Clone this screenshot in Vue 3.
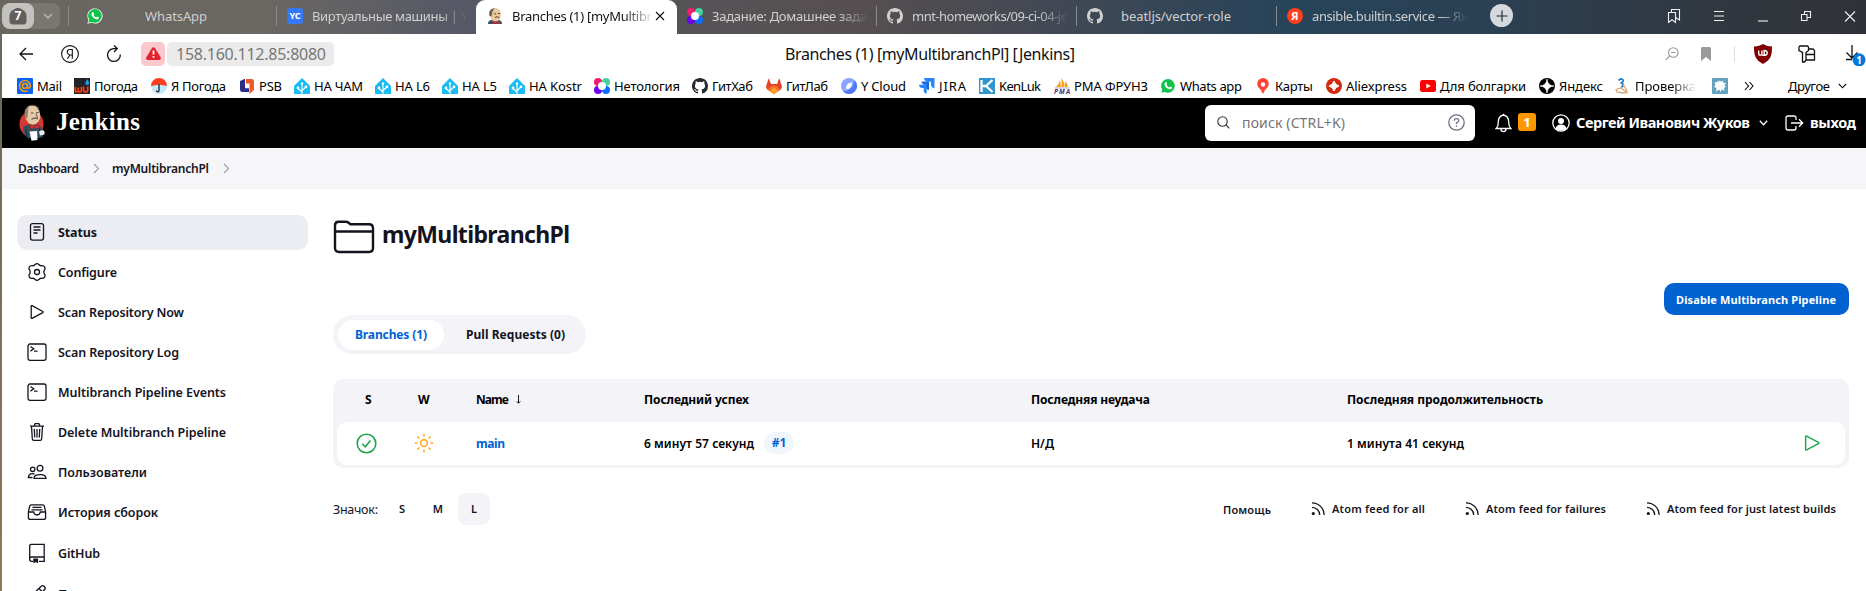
<script setup>
const NBSP = '\u00a0'

// Spreads a label to a given width with letter spacing.
const vFit = {
  mounted(el, { value }) {
    const chars = el.textContent.length
    if (!value || !chars) return
    const spacing = (value - el.getBoundingClientRect().width) / Math.max(chars - 1, 1)
    el.style.letterSpacing = `${spacing}px`
    el.style.marginRight = `${-spacing}px`
  }
}

const tabs = [
  { icon: 'whatsapp', text: 'WhatsApp', w: 62, wide: true },
  { icon: 'yc', text: 'Виртуальные машины | Y', w: 156, fade: true },
  { icon: 'jenkins-small', text: 'Branches (1) [myMultibr', w: 140, fade: true, active: true },
  { icon: 'netology', text: 'Задание: Домашнее зада', w: 155, fade: true, nosep: true },
  { icon: 'github', text: 'mnt-homeworks/09-ci-04-je', w: 156, fade: true },
  { icon: 'github', text: 'beatljs/vector-role', w: 110, center: true },
  { icon: 'yandex', text: 'ansible.builtin.service — Ян', w: 157, fade: true }
]

const bookmarks = [
  ['mail', 'Mail', 17, 25], ['wu', 'Погода', 74, 44], ['umbrella', 'Я Погода', 151, 55],
  ['psb', 'PSB', 239, 23], ['ha', 'НА ЧАМ', 294, 49], ['ha', 'НА L6', 375, 35],
  ['ha', 'НА L5', 442, 35], ['ha', 'НА Kostr', 509, 53], ['netology', 'Нетология', 594, 66],
  ['github', 'ГитХаб', 692, 41], ['gitlab', 'ГитЛаб', 766, 42], ['ycloud', 'Y Cloud', 841, 45],
  ['jira', 'JIRA', 919, 27], ['kenluk', 'KenLuk', 979, 42], ['pma', 'РМА ФРУНЗ', 1054, 74],
  ['whatsapp', 'Whats app', 1160, 62], ['pin', 'Карты', 1255, 38], ['ali', 'Aliexpress', 1326, 61],
  ['youtube', 'Для болгарки', 1420, 86], ['dzen', 'Яндекс', 1539, 44], ['check3', 'Проверка', 1615, 61],
  ['splat', '', 1712, 0]
].map(([icon, text, x, w], i, all) => ({ icon, text, w, step: (all[i + 1]?.[2] ?? 1744) - x }))

const side = [
  ['status', 'Status', 39], ['gear', 'Configure', 59], ['play', 'Scan Repository Now', 126],
  ['terminal', 'Scan Repository Log', 121], ['terminal', 'Multibranch Pipeline Events', 168],
  ['trash', 'Delete Multibranch Pipeline', 168], ['people', 'Пользователи', 89],
  ['inbox', 'История сборок', 100], ['repo', 'GitHub', 42], ['pencil', 'Переименовать', 102]
]

const feeds = [
  ['Atom feed for all', 93, 154], ['Atom feed for failures', 120, 181], ['Atom feed for just latest builds', 169, 190]
]
</script>

<template>
  <svg class="sprite" width="0" height="0">
    <symbol id="whatsapp" viewBox="0 0 16 16">
      <path d="M0.4 15.8 1.4 11.8A7.6 7.6 0 1 1 4.6 14.8Z" fill="#fff" /><path d="M1.3 14.8 2.2 11.6A6.8 6.8 0 1 1 4.7 13.9Z" fill="#10c24a" />
      <path d="M5.4 4.3c.5-.5 1-.3 1.2.2l.5 1.2c.1.4-.6.9-.6 1.1.5 1.2 1.5 2.1 2.7 2.6.3 0 .8-1 1.1-.9l1.5.8c.4.3 0 1.400-.5 1.700C8.800 12.400 4 8.500 4.500 5.700c.1-.6.500-1 .9-1.400Z" fill="#fff" />
    </symbol>
    <symbol id="yc" viewBox="0 0 16 16"><rect width="16" height="16" rx="3" fill="#3478f6" /><text x="8" y="11.3" text-anchor="middle" font-size="9" font-weight="700" fill="#fff">YC</text></symbol>
    <symbol id="jenkins-small" viewBox="0 0 16 16">
      <path d="M1 16c0-2.500 1.500-4 4-4h6c2.500 0 4 1.500 4 4Z" fill="#34506a" /><path d="M3 5C3 1 6 .3 8.500.3S14 2 14 6s-2 7.500-5.500 7.500S3 10 3 5Z" fill="#ecc8a0" />
      <path d="M2.600 8C.8 2 5 0 8.500.2 6 1 5.300 3 4.600 8.500Z" fill="#6a5f53" /><path d="M7 5.800h2.300M11 5.500h2M8 9.500q2-1.500 4.500 0" stroke="#54463a" fill="none" /><path d="M5.500 13 9 14l3.500-1v3L9 15l-3.500 1Z" fill="#d8262f" />
    </symbol>
    <symbol id="netology" viewBox="0 0 16 16"><circle cx="4" cy="4" r="4" fill="#f01d70" /><circle cx="12" cy="4" r="4" fill="#45d09e" /><circle cx="4" cy="12" r="4" fill="#6a00f4" /><circle cx="12" cy="12" r="4" fill="#0c6cff" /><circle cx="8" cy="8" r="4" fill="#fff" /></symbol>
    <symbol id="github" viewBox="0 0 16 16"><path fill="currentColor" d="M8 0C3.580 0 0 3.580 0 8c0 3.540 2.290 6.530 5.470 7.590.4.070.55-.17.55-.38 0-.19-.01-.82-.01-1.490-2.010.37-2.530-.49-2.690-.94-.09-.23-.48-.94-.82-1.130-.28-.15-.68-.52-.01-.53.63-.01 1.080.58 1.230.82.72 1.210 1.870.87 2.330.66.07-.52.28-.87.51-1.070-1.780-.2-3.640-.89-3.640-3.950 0-.87.31-1.590.82-2.150-.08-.2-.36-1.020.08-2.120 0 0 .67-.21 2.200.82a7.600 7.600 0 0 1 4 0c1.530-1.040 2.200-.82 2.200-.82.44 1.100.16 1.920.08 2.120.51.56.82 1.270.82 2.150 0 3.070-1.870 3.750-3.650 3.950.29.25.54.73.54 1.480 0 1.070-.01 1.930-.01 2.200 0 .21.15.46.55.38A8.010 8.010 0 0 0 16 8c0-4.420-3.580-8-8-8Z" /></symbol>
    <symbol id="yandex" viewBox="0 0 16 16"><circle cx="8" cy="8" r="8" fill="#fc3f1d" /><text x="7.800" y="12" text-anchor="middle" font-size="11" font-weight="700" fill="#fff">Я</text></symbol>
    <symbol id="mail" viewBox="0 0 16 16"><rect width="16" height="16" rx="1" fill="#0a63f5" /><circle cx="8" cy="8" r="2.500" fill="none" stroke="#ff9e00" stroke-width="1.500" /><path d="M10.500 5.500v3.500q.2 1.500 1.500 1.200 1.500-.7 1.300-3A5.400 5.400 0 1 0 11 12.500" fill="none" stroke="#ff9e00" stroke-width="1.400" /></symbol>
    <symbol id="wu" viewBox="0 0 16 16"><rect width="16" height="16" fill="#20242a" /><path d="M1.300 9v3q0 2 1.400 2t1.600-2V9.500v2.500q0 2 1.500 2T7.400 12V9M9.600 8.500V12q0 2 1.900 2 2.200 0 2.200-2V8.500" fill="none" stroke="#ff3b10" stroke-width="1.700" /><path d="M13 1c2 3 2.500 3.500 1.800 5.200q-1.600 1.500-3.200 0C11 4.500 12 3.500 13 1Z" fill="#19a4ef" /></symbol>
    <symbol id="umbrella" viewBox="0 0 16 16"><circle cx="8" cy="8" r="8" fill="#c4e8fb" /><path d="M0 8a8 8 0 0 1 16 0L8 6.500Z" fill="#fc3f1d" /><path d="M8 6v6.500c0 1.800-2.500 1.800-2.500 0" fill="none" stroke="#222" stroke-width="1.300" /></symbol>
    <symbol id="psb" viewBox="0 0 16 16"><path d="M1 3 6 .8v9.500h4V14H3.500A2.500 2.500 0 0 1 1 11.500Z" fill="#2b2c85" /><path d="M7 1h5.500A2.500 2.500 0 0 1 15 3.500V12l-4.500 4V5.500H7Z" fill="#f0592a" /></symbol>
    <symbol id="ha" viewBox="0 0 16 16"><path d="M8 0 16 8v7.200q0 .8-.8.8H.8q-.8 0-.8-.8V8Z" fill="#18bcf2" /><path d="M8 6v10M8 14 4 10.500M8 12.500 12 9" stroke="#fff" stroke-width="1.100" /><circle cx="8" cy="5.500" r="1.200" fill="#fff" /><circle cx="4" cy="10" r="1.400" fill="#fff" /><circle cx="12" cy="8.800" r="1.400" fill="#fff" /></symbol>
    <symbol id="gitlab" viewBox="0 0 16 16"><path d="M3 .8 5 6h6l2-5.200q.3-.3.500 0L16 8.500q0 2-1.500 3.200L8 16l-6.500-4.300Q0 10.500 0 8.500L2.500.8q.2-.3.500 0Z" fill="#e24329" /><path d="M8 16 1.500 11.500 5 8.500q3-2 6 0l3.500 3Z" fill="#fc6d26" /><path d="M8 9.500 12 13 8 16 4 13Z" fill="#fca326" /></symbol>
    <symbol id="ycloud" viewBox="0 0 16 16"><circle cx="8" cy="8" r="8" fill="#8ba6ff" /><path d="M13.500 2.200A8 8 0 1 1 2 13.300Q12 13 13.500 2.200Z" fill="#5077f8" /><path d="M11 4.500Q11.500 11 5.200 11.300 4.500 5 11 4.500Z" fill="#fff" /></symbol>
    <symbol id="jira" viewBox="0 0 16 16"><path d="M5 0h10.500v10.300q-3.500-.4-3.500-4V3.700H9.300Q5.300 3.500 5 0Z" fill="#2684ff" /><path d="M2.500 3.500h7.500v8.500q-3-.3-3-3.200V6.700H5.500q-2.700-.2-3-3.200Z" fill="#1769e0" /><path d="M0 6.800h7.700v8.800q-3-.3-3-3.200V10H3.200Q.3 10 0 6.800Z" fill="#2684ff" /></symbol>
    <symbol id="kenluk" viewBox="0 0 16 16"><rect width="16" height="16" fill="#2f95d0" /><path d="M2.500 2v12M13.500 2 7 8l6.500 6M3.500 8H8" fill="none" stroke="#fff" stroke-width="2.300" /></symbol>
    <symbol id="pma" viewBox="0 0 16 16"><path d="M2 9Q5 6 6 2l1 7ZM7.500 0Q11 5 10.500 9h-3ZM11 3q3 3 3 6h-3Z" fill="#f7a21b" /><path d="M1 10h14" stroke="#a7a7c4" /><text x="8" y="16" text-anchor="middle" textLength="16" font-size="6.500" font-weight="700" font-style="italic" fill="#38357c">PMA</text></symbol>
    <symbol id="pin" viewBox="0 0 16 16"><path d="M8 16Q6.500 11.500 4 10A5.800 5.800 0 1 1 12 10Q9.500 11.500 8 16Z" fill="#ff4433" /><circle cx="8" cy="6.500" r="2.200" fill="#fff" /></symbol>
    <symbol id="ali" viewBox="0 0 16 16"><circle cx="8" cy="8" r="8" fill="#d32a12" /><path d="M8 3Q9 7 13 8 9 9 8 13 7 9 3 8 7 7 8 3Z" fill="#fff" stroke="#fff" /></symbol>
    <symbol id="youtube" viewBox="0 0 16 16"><rect y="2" width="16" height="12" rx="2.500" fill="#f00" /><path d="M6.300 5.500v5L10.800 8Z" fill="#fff" /></symbol>
    <symbol id="dzen" viewBox="0 0 16 16"><circle cx="8" cy="8" r="8" fill="#000" /><path d="M8 1Q8.500 7.500 15 8 8.500 8.500 8 15 7.500 8.500 1 8 7.500 7.500 8 1Z" fill="#fff" stroke="#fff" stroke-width=".6" /></symbol>
    <symbol id="check3" viewBox="0 0 16 16"><path d="M3.500 2.500Q5 .5 7 1.200C9 2 8.500 4.500 5.500 5 9 5 9 8.500 6 9" fill="none" stroke="#2a80cc" stroke-width="1.800" /><path d="M1 11.500 6 10l6 4.500-4 .5-6-1ZM8 6l3 5 1 4" fill="none" stroke="#d5a874" stroke-width="1.300" /></symbol>
    <symbol id="splat" viewBox="0 0 16 16"><rect width="16" height="16" rx="1" fill="#63a2bf" /><path d="m8 2 .8 2L11 2.500l.3 2.300L14 5l-1.500 2.200L14 9l-2 .8.500 3L10 11.500 8.500 14l-1.200-2.500L4 13.500 4.500 10 2 8.800 3.500 7 2.500 4.200l2.700.3L5.500 2.500 7 4Z" fill="#fff" /></symbol>
    <symbol id="status" viewBox="0 0 20 20"><g fill="none" stroke="currentColor" stroke-width="1.300"><rect x="3.500" y="1.600" width="13" height="16.500" rx="2" /><path d="M6.500 5h7M6.500 8h7M6.500 11h4" /></g></symbol>
    <symbol id="gear" viewBox="0 0 20 20"><g fill="none" stroke="currentColor" stroke-width="1.300" stroke-linejoin="round"><path d="M8.100 2.400Q10 .8 11.900 2.400q.9 1.700 2.700 1.300 2.400-.2 2.900 1.200 1 1.800 0 3-1.400 2.100 0 4.200 1 1.200 0 3-.8 1.500-2.900 1.200-1.800-.3-2.700 1.300-1.900 1.600-3.800 0-.9-1.600-2.700-1.300-2.100.3-2.900-1.200-1-1.800 0-3 1.400-2.100 0-4.200-1-1.200 0-3Q3 3.500 5.400 3.700q1.800.4 2.700-1.300Z" /><circle cx="10" cy="10" r="2.500" /></g></symbol>
    <symbol id="play" viewBox="0 0 20 20"><path d="M4.200 4.300v11.400q0 1 .9.600l10.700-5.700q.8-.6 0-1.100L5.100 3.700q-.9-.4-.9.600Z" fill="none" stroke="currentColor" stroke-width="1.300" /></symbol>
    <symbol id="terminal" viewBox="0 0 20 20"><g fill="none" stroke="currentColor" stroke-width="1.300"><rect x="1" y="2" width="18" height="16.300" rx="2" /><path d="m3.500 4.500 3.200 2.300-3.200 2.300M7 9.200h3.500" /></g></symbol>
    <symbol id="trash" viewBox="0 0 20 20"><g fill="none" stroke="currentColor" stroke-width="1.300"><path d="M3 4.200h14M4.500 4.200l.8 12.500q.1 1.600 1.600 1.600h6.200q1.500 0 1.600-1.600l.8-12.500M7.500 4V2.600q0-.9.900-.9h3.200q.9 0 .9.900V4M7.300 7l.4 8.500M10 7v8.500M12.700 7l-.4 8.500" /></g></symbol>
    <symbol id="people" viewBox="0 0 20 20"><g fill="none" stroke="currentColor" stroke-width="1.300"><circle cx="13" cy="6.300" r="2.900" /><path d="M7 16.300c0-5 12-5 12 0Z" /><circle cx="5.700" cy="7.300" r="2.200" /><path d="M7.500 12Q2 10.500 1.300 15.500H5.500" /></g></symbol>
    <symbol id="inbox" viewBox="0 0 20 20"><g fill="none" stroke="currentColor" stroke-width="1.300"><path d="M4.200 2.800h11.600q1.200 0 1.500 1.200l1.300 6v5.500q0 1.900-1.900 1.900H3.300q-1.900 0-1.900-1.900V10l1.300-6q.3-1.200 1.500-1.200ZM1.500 10h5.200q.5 3 3.300 3t3.300-3h5.200M5.500 5.300h9M4.500 7.800h11" /></g></symbol>
    <symbol id="repo" viewBox="0 0 20 20"><g fill="none" stroke="currentColor" stroke-width="1.300"><path d="M6 18.300H4.500q-1.800 0-1.800-1.800V2.800q0-1.500 1.500-1.500h13v17H12M2.800 15.800q0-1.800 1.800-1.800h12.600" /></g><path d="M6.300 15.500h4.800v5l-2.400-1.600-2.400 1.600Z" fill="currentColor" /></symbol>
    <symbol id="pencil" viewBox="0 0 20 20"><path d="m2 18 1-5L14.500 2q1.300-1 2.800.500t.5 2.800L6.500 17ZM12 4.500l3.500 3.500" fill="none" stroke="currentColor" stroke-width="1.300" /></symbol>
    <symbol id="rss" viewBox="0 0 14 14"><g fill="none" stroke="currentColor" stroke-width="1.300"><path d="M1 .8A12.300 12.300 0 0 1 13.200 13M1 5.300A7.800 7.800 0 0 1 8.700 13" /></g><circle cx="2.300" cy="11.500" r="1.600" fill="currentColor" /></symbol>
  </svg>

  <div class="window">
    <div class="tabstrip">
      <div class="group"><span class="count"><svg width="18" height="18" viewBox="0 0 18 18"><path d="M3.500 3.200 7 1.200Q9 .3 11 1.200l3.500 2Q17.500 5 17.500 8v6q0 3.500-3.500 3.500H4Q.5 17.500.5 14V8Q.5 5 3.500 3.200Z" fill="#62605a" /></svg><b>7</b></span><svg width="10" height="6" viewBox="0 0 10 6"><path d="m1 1 4 4 4-4" class="line soft" /></svg></div>
      <div v-for="(t, i) in tabs" :key="i" class="tab" :class="{ active: t.active, wide: t.wide, center: t.center, nosep: t.nosep }">
        <svg width="16" height="16"><use :href="'#' + t.icon" /></svg>
        <div class="tabtext" :class="{ fade: t.fade }"><span v-fit="t.w">{{ t.text }}</span></div>
        <svg v-if="t.active" class="close" width="10" height="10" viewBox="0 0 10 10"><path d="m1 1 8 8m0-8-8 8" class="line" /></svg>
      </div>
      <div class="plus"><svg width="12" height="12" viewBox="0 0 12 12"><path d="M6 .5v11M.5 6h11" class="line" /></svg></div>
      <div class="wincontrols">
        <svg width="14" height="16" viewBox="0 0 14 16"><path d="M1.500 4.500h7V14.500L5 11.800 1.500 14.500ZM4.500 4.500V1.500h8V12l-4-2.500" class="line" /></svg>
        <svg width="12" height="16" viewBox="0 0 12 16"><path d="M1 3.500h10M1 8h10M1 12.500h10" class="line" /></svg>
        <svg width="12" height="16" viewBox="0 0 12 16"><path d="M1 13h10" class="line" /></svg>
        <svg width="12" height="16" viewBox="0 0 12 16"><path d="M1.500 6.500h5.500v6h-5.500ZM4.500 6.500V3.500h6v6H7" class="line" /></svg>
        <svg width="12" height="16" viewBox="0 0 12 16"><path d="m1 3.500 10 10m0-10-10 10" class="line" /></svg>
      </div>
    </div>

    <div class="toolbar">
      <svg class="back" width="14" height="14" viewBox="0 0 14 14"><path d="M14 7H1M7 1 1 7l6 6" class="line mid" /></svg>
      <svg class="ya" width="18" height="18" viewBox="0 0 18 18"><circle cx="9" cy="9" r="8.400" class="line" /><path d="M11.300 13.700V4.500H9q-2.800 0-2.800 2.400 0 1.400 1.200 2.200l1.500 1L6.300 13.700M11.300 10H9.500" class="line" /></svg>
      <svg class="reload" width="16" height="18" viewBox="0 0 16 18"><path d="M14.300 9.500A6.400 6.400 0 1 1 8 3.600h3M8 .5l3.300 3.100L8 7" class="line mid" /></svg>
      <div class="warn"><svg width="15" height="13" viewBox="0 0 15 13"><path d="M6 1Q7.500-.7 9 1l5.500 9q1 2-1 3H1.500q-2-1-1-3Z" fill="#e2232e" /><path d="M7.500 3.500v4M7.500 9v1.700" stroke="#fff" stroke-width="1.800" /></svg></div>
      <div class="url"><span v-fit="150">158.160.112.85:8080</span></div>
      <div class="pagetitle"><span v-fit="290">Branches (1) [myMultibranchPl] [Jenkins]</span></div>
      <div class="tools">
        <svg class="lens" width="14" height="14" viewBox="0 0 14 14"><circle cx="8.300" cy="5.500" r="4.800" class="line" /><path d="M.8 12.800 4.700 9M6 5.500h4.600" class="line" /></svg>
        <svg class="mark" width="10" height="14" viewBox="0 0 10 14"><path d="M0 1.500Q0 0 1.500 0h7Q10 0 10 1.500V14L5 10 0 14Z" fill="#999" /></svg>
        <i class="vline"></i>
        <svg class="shield" width="18" height="20" viewBox="0 0 18 20"><path d="M9 0q4 2.500 9 2.500c0 9-1 13-9 17.500C1 15.500 0 11.500 0 2.500 5 2.500 9 0 9 0Z" fill="#800000" /><path d="M4.700 6.500v3q0 1.800 1.500 1.800T7.900 9.500V6.500M7.900 11.300h2.300q3 0 3-2.400t-3-2.400v4.800" fill="none" stroke="#fff" stroke-width="1.400" /></svg>
        <svg class="keys" width="18" height="18" viewBox="0 0 18 18"><path d="M2 1h7.500l1 1v3.500L8 7.500V15l-1.500 2H4.500V7.500L1 5.500V2ZM10.500 4H15l1.500 1.500V15H8.500M8.500 9.500H16.500" class="line mid" /></svg>
        <svg class="down" width="22" height="24" viewBox="0 0 22 24"><path d="M8 3v13M2.500 10.500 8 16l5.500-5.500M2 17.500h6" class="line mid" /><circle cx="15" cy="17.800" r="6.500" fill="#0078dc" /><text x="15" y="21.500" text-anchor="middle" font-size="10" font-weight="700" fill="#fff">1</text></svg>
      </div>
    </div>

    <div class="bookmarks">
      <div v-for="(b, i) in bookmarks" :key="i" class="bm" :style="{ width: b.step + 'px' }">
        <svg width="16" height="16"><use :href="'#' + b.icon" /></svg><span v-if="b.text" v-fit="b.w" :class="{ fadebm: b.text === 'Проверка' }">{{ b.text }}</span>
      </div>
      <svg class="more" width="10" height="10" viewBox="0 0 10 10"><path d="m1 1 3.500 4L1 9M5.500 1 9 5 5.500 9" class="line" /></svg>
      <span v-fit="42">Другое</span>
      <svg class="drop" width="9" height="6" viewBox="0 0 9 6"><path d="m.8.8 3.700 4 3.700-4" class="line" /></svg>
    </div>

    <header class="jhead">
      <svg class="logo" width="28" height="37" viewBox="0 0 28 37">
        <ellipse cx="12.500" cy="20" rx="12" ry="13" fill="#d33833" />
        <path d="M4 23.500q2-2.500 6-3l8 .5q4.500 1 5.500 4l.5 8-5 1H9Q4.500 31 4 23.500Z" fill="#335061" />
        <path d="M6.500 9Q6.500 1.200 13.500 1.200T20.500 8q2 5-1 9.500-3 3.500-6 3.200Q9 20 7.500 16 5.500 14 6.500 9Z" fill="#e6c9a6" />
        <path d="M6 13Q4 4 11 1.300 8.500 4 9 7.500L8.500 13 7.500 15Z" fill="#8c8378" />
        <path d="M11 1.300q7-1 9 5.200M12 9h2.500M17.300 8.500h2.200M17 9.500l1.500 4" stroke="#4a4038" stroke-width=".9" fill="none" /><path d="M12.500 15.500q3.500-2.800 6.500-.5" stroke="#6d6256" stroke-width="1.400" fill="none" />
        <path d="M11 20.500 15.500 22l4.500-1.500-.3 4.500-4.200-1.500-4.200 1.500Z" fill="#d33833" stroke="#8f1f20" stroke-width=".6" />
        <path d="M10.500 27.500 18 27l.5 9-6 .8Z" fill="#fff" /><path d="M20 27.500q4-2.500 5.500 0v3l-4.500 1Z" fill="#e6edf0" /><path d="M7 25l1 8M20.500 24v3" stroke="#1e313c" />
      </svg>
      <span v-fit="84" class="brand">Jenkins</span>
      <div class="search">
        <svg width="13" height="13" viewBox="0 0 13 13"><circle cx="5.500" cy="5.500" r="4.700" class="line" /><path d="m9 9 3.300 3.300" class="line" /></svg>
        <span v-fit="103">поиск (CTRL+K)</span>
        <svg class="help" width="17" height="17" viewBox="0 0 17 17"><circle cx="8.500" cy="8.500" r="7.700" class="line mid" /><path d="M6.300 6.700q0-2 2.200-2t2.200 1.800Q10.700 8 8.500 8.800V10M8.500 11.300v1.400" class="line mid" /></svg>
      </div>
      <svg class="bell" width="17" height="20" viewBox="0 0 17 20"><path d="M1.200 15.500h14.600Q13.700 13.500 13.700 9 13.700 3 8.500 2 3.300 3 3.300 9q0 4.500-2.100 6.500ZM8.500 2V.8M6 16q0 2.600 2.500 2.600T11 16" class="line mid" /></svg>
      <b class="alert">1</b>
      <svg class="user" width="18" height="18" viewBox="0 0 18 18"><circle cx="9" cy="9" r="8.200" class="line mid" /><circle cx="9" cy="7" r="3" fill="#fff" /><path d="M3.500 14.500q1-4 5.500-4t5.500 4Q9 19 3.500 14.500Z" fill="#fff" /></svg>
      <b v-fit="174" class="up">Сергей Иванович Жуков</b>
      <svg class="udrop" width="9" height="6" viewBox="0 0 9 6"><path d="m.8.8 3.700 4 3.700-4" class="line mid" /></svg>
      <svg class="exit" width="19" height="16" viewBox="0 0 19 16"><path d="M11 5V3Q11 1 9 1H3Q1 1 1 3v10q0 2 2 2h6q2 0 2-2v-2M6 8h11.500M14 4.300 17.700 8 14 11.700" class="line mid" /></svg>
      <b v-fit="46" class="up">выход</b>
    </header>

    <nav class="crumbs">
      <span v-fit="61">Dashboard</span><svg width="7" height="11" viewBox="0 0 7 11"><path d="m1 1 4.500 4.500L1 10" class="line" /></svg>
      <span v-fit="97">myMultibranchPl</span><svg width="7" height="11" viewBox="0 0 7 11"><path d="m1 1 4.500 4.500L1 10" class="line" /></svg>
    </nav>

    <div class="page">
      <aside>
        <div v-for="([icon, text, w], i) in side" :key="i" class="item" :class="{ on: i === 0 }"><svg width="20" height="20"><use :href="'#' + icon" /></svg><span v-fit="w">{{ text }}</span></div>
      </aside>
      <main>
        <div class="title"><svg width="42" height="34" viewBox="0 0 42 34"><path d="M2 28V5.500Q2 1.800 5.500 1.800h7q2 0 3.500 1.200l1.500 1.300H36q4 0 4 4V28q0 4-4 4H6q-4 0-4-4ZM2 11.500h38" fill="none" stroke="#14141f" stroke-width="2.400" /></svg><h1 v-fit="188">myMultibranchPl</h1></div>
        <div class="actions"><button><span v-fit="160">Disable Multibranch Pipeline</span></button></div>
        <div class="pills"><div class="pill on"><span v-fit="72">Branches (1)</span></div><div class="pill"><span v-fit="99">Pull Requests (0)</span></div></div>
        <div class="table">
          <div class="row head">
            <span class="c">S</span><span class="c">W</span><span><em v-fit="33">Name</em><svg class="sort" width="7" height="9" viewBox="0 0 7 9"><path d="M3.500 0v8M1.700 6.300l1.800 1.900 1.800-1.900" class="line thin" /></svg></span>
            <span><em v-fit="105">Последний успех</em></span><span><em v-fit="119">Последняя неудача</em></span><span><em v-fit="196">Последняя продолжительность</em></span><span></span>
          </div>
          <div class="row body">
            <span class="ok"><svg width="21" height="21" viewBox="0 0 21 21"><circle cx="10.500" cy="10.500" r="9.300" /><path d="m6.300 10.800 3 3 5.200-6.300" /></svg></span>
            <span class="sun"><svg width="20" height="20" viewBox="0 0 20 20"><circle cx="10" cy="10" r="3.400" /><path d="M10 .8v2.700M10 16.500v2.700M.8 10h2.700M16.500 10h2.700M3.500 3.500l1.900 1.900M14.600 14.600l1.900 1.900M16.500 3.500l-1.900 1.900M5.400 14.600l-1.900 1.900" /></svg></span>
            <span class="link"><em v-fit="29">main</em></span>
            <span><em v-fit="110">6 минут 57 секунд</em><b class="build">#1</b></span>
            <span><em v-fit="23">Н/Д</em></span><span><em v-fit="117">1 минута 41 секунд</em></span>
            <span class="run"><svg width="22" height="22" viewBox="0 0 20 20"><use href="#play" /></svg></span>
          </div>
        </div>
        <div class="foot">
          <span v-fit="45" class="lbl">Значок:</span>
          <div class="sizes"><span>S</span><span>M</span><span class="on">L</span></div>
          <span v-fit="48" class="helplink">Помощь</span>
          <div class="feeds"><div v-for="([text, w, step], i) in feeds" :key="i" :style="{ width: step + 'px' }"><svg width="14" height="14"><use href="#rss" /></svg><span v-fit="w">{{ text.replace(/ (?=for)/, NBSP) }}</span></div></div>
        </div>
      </main>
    </div>
  </div>
</template>

<style>
html, body { margin: 0; background: #fff; overflow: hidden; }
</style>

<style scoped>
svg { flex: none; display: block; }
svg.sprite { display: none; }
.sprite text, .window { font-family: "Noto Sans", "Open Sans", sans-serif; }
.window { box-sizing: border-box; width: 1866px; height: 591px; overflow: hidden; color: #14141f; font-size: 13px; white-space: nowrap; background: linear-gradient(#6b655c, #8b7a58) 0 0 / 2px 100% no-repeat #fff; }
.window *, .window { box-sizing: border-box; }
span, b, em { font-style: normal; flex: none; }
.line { fill: none; stroke: currentColor; stroke-width: 1.1; }
.mid { stroke-width: 1.3; }
.thin { stroke-width: .9; }
.soft { stroke: #b9b7b2; stroke-width: 1.5; }

.tabstrip { height: 34px; display: flex; background: linear-gradient(90deg, #69655f 0, #6b6762 14%, #555966 25%, #565459 34%, #564f50 46%, #414854 57%, #27445a 69%, #2b4053 80%, #31373f 92%, #303238 100%); color: #d0d0d0; }
.group { width: 58px; height: 26px; margin: 3px 8px 0 2px; border-radius: 8px; background: #7a7771; display: flex; align-items: center; }
.count { width: 32px; height: 26px; margin-right: 9px; border-radius: 8px; background: #c3c2bf; display: grid; place-items: center; }
.count > * { grid-area: 1 / 1; }
.count b { color: #fff; font-size: 12px; line-height: 18px; }
.tab { width: 200px; height: 34px; padding: 0 8px 2px 11px; display: flex; align-items: center; background: linear-gradient(#8b8b8e, #8b8b8e) 0 6px / 1px 20px no-repeat; flex: none; }
.tab.wide { width: 208px; padding-left: 19px; }
.tab.wide .tabtext { margin-left: 42px; }
.tab.center .tabtext { margin-left: 18px; }
.tab.nosep { background: none; }
.tab.active { width: 201px; margin-right: -1px; color: #111; background: #fff; border-radius: 9px 9px 0 0; z-index: 1; }
.tab.active .tabtext { flex: none; width: 142px; }
.tabtext { flex: 1; margin-left: 9px; overflow: hidden; display: flex; line-height: 22px; }
.fade { -webkit-mask: linear-gradient(90deg, #000 calc(100% - 30px), transparent); mask: linear-gradient(90deg, #000 calc(100% - 30px), transparent); }
.close { margin-left: 1px; }
.plus { width: 23px; height: 23px; margin: 4px 0 0 14px; border-radius: 50%; background: #d4d9de; color: #222; display: grid; place-items: center; }
.wincontrols { margin: 8px 10px 0 auto; display: flex; width: 189px; justify-content: space-between; color: #f1f1f1; }

.toolbar { height: 39px; margin: 0 0 0 2px; display: flex; align-items: center; background: #fff; color: #111; }
.back { margin-left: 17px; }
.ya { margin-left: 28px; }
.reload { margin-left: 27px; }
.warn { width: 24px; height: 24px; margin-left: 19px; border-radius: 5px; background: #fbc9cd; display: grid; place-items: center; }
.url { width: 167px; height: 24px; margin-left: 2px; padding-left: 9px; border-radius: 5px; background: #ebebeb; color: #777; font-size: 16px; line-height: 24px; display: flex; }
.pagetitle { margin-left: 451px; font-size: 16px; line-height: 24px; display: flex; width: 290px; }
.tools { margin-left: auto; display: flex; align-items: center; height: 38px; }
.lens { color: #999; margin-right: 22px; }
.mark { margin-right: 23px; }
.vline { width: 1px; height: 16px; background: #ddd; margin-right: 19px; }
.shield { margin-right: 26px; }
.keys { margin-right: 28px; }
.down { margin-right: 0; }

.bookmarks { height: 25px; padding-left: 17px; display: flex; align-items: center; color: #000; padding-top: 1px; }
.bm { display: flex; align-items: center; flex: none; }
.bm svg { margin-right: 4px; color: #24292f; }
.bookmarks > span { margin-left: 34px; }
.more { margin-left: 0; }
.drop { margin-left: 8px; }
.fadebm { -webkit-mask: linear-gradient(90deg, #000 60%, transparent); mask: linear-gradient(90deg, #000 60%, transparent); }

.jhead { height: 50px; margin-left: 2px; background: #000; color: #fff; display: flex; align-items: center; font-size: 14.500px; padding-right: 10px; padding-bottom: 1px; }
.logo { margin-left: 17px; }
.brand { font: bold 25px/30px "Liberation Serif", serif; margin-left: 9px; padding-bottom: 2px; }
.search { width: 270px; height: 36px; margin-left: auto; padding: 0 10px 0 12px; background: #fff; border-radius: 6px; display: flex; align-items: center; color: #333; }
.search span { margin-left: 12px; color: #757575; font-size: 14px; padding-bottom: 1px; }
.help { margin-left: auto; color: #6f6f87; }
.bell { margin-left: 20px; }
.alert { width: 18px; height: 18px; margin: 0 0 1px 6px; border-radius: 3px; background: #ff9800; font-size: 13px; line-height: 18px; text-align: center; }
.user { margin: 0 6px 0 16px; }
.up { padding-bottom: 2px; }
.udrop { margin: 0 0 0 9px; }
.exit { margin: 0 6px 0 17px; }

.crumbs { height: 41px; margin-left: 2px; padding-left: 16px; background: #f6f6f9; display: flex; align-items: center; font-weight: 600; font-size: 12px; }
.crumbs svg { margin: 0 12px 0 14px; color: #9a9aae; }

.page { display: flex; }
aside { width: 291px; margin: 26px 0 0 17px; flex: none; }
.item { height: 35px; margin-bottom: 5.050px; padding: 0 0 1px 10px; display: flex; align-items: center; font-weight: 600; font-size: 12.500px; border-radius: 10px; }
.item span { margin-left: 11px; }
.item.on { background: #ecedf3; font-weight: 700; }
.item:nth-last-child(2) { margin-top: 6px; }
.item:last-child { margin-top: 6px; }
main { width: 1516px; margin-left: 25px; display: flex; flex-direction: column; }
.title { display: flex; height: 34px; margin-top: 31px; }
h1 { margin: -3px 0 0 7px; font-size: 23px; line-height: 34px; font-weight: 700; flex: none; }
.actions { display: flex; justify-content: flex-end; margin-top: 29px; }
button { width: 185px; height: 32px; padding: 1px 0 0 12px; border: 0; border-radius: 10px; background: #0062d1; color: #fff; font: 700 11px "Noto Sans", sans-serif; display: flex; align-items: center; }
.pills { width: 253px; height: 39px; padding: 5px; border-radius: 20px; background: #f3f3f8; display: flex; font-weight: 700; font-size: 12px; }
.pill { height: 30px; padding: 0 0 2px 22px; display: flex; align-items: center; }
.pill.on { width: 106px; padding-left: 17px; border-radius: 15px; background: #fff; color: #0062d1; }
.table { margin-top: 25px; height: 89px; padding: 0 4px; border-radius: 10px; background: #f3f3f8; color: #000; font-size: 12px; flex: none; }
.row { display: grid; grid-template-columns: 64px 75px 168px 387px 316px 454px 1fr; height: 43px; align-items: center; }
.row > span { display: flex; align-items: center; }
.head { font-weight: 700; padding-bottom: 3px; }
.head .c:first-child { padding-left: 28px; }
.head .c + .c { padding-left: 17px; }
.sort { margin-left: 6px; }
.body { background: #fff; border-radius: 10px; font-weight: 600; padding-bottom: 1px; }
.ok { padding-left: 19px; }
.sun { padding-left: 13px; }
.ok svg, .sun svg { fill: none; stroke: #1ea64b; stroke-width: 1.600; }
.sun svg { stroke: #feaf25; }
.link, .build { color: #0062d1; font-weight: 700; }
.build { width: 30px; height: 22px; margin-left: 10px; border-radius: 11px; background: #f0f6fc; line-height: 22px; text-align: center; }
.row > .run { display: block; color: #1ea64b; }
.foot { display: flex; align-items: center; height: 32px; margin-top: 25px; font-size: 12px; font-weight: 600; }
.foot .lbl { font-weight: 400; font-size: 12.500px; }
.sizes { display: flex; margin-left: 8px; gap: 4px; font-size: 11px; font-weight: 600; }
.sizes span { width: 32px; height: 32px; line-height: 31px; text-align: center; border-radius: 8px; }
.sizes .on { background: #f3f3f8; }
.helplink { margin-left: 733px; font-size: 11px; padding-top: 1px; }
.feeds { display: flex; margin-left: 40px; font-size: 11px; padding-bottom: 1px; }
.feeds div { display: flex; align-items: center; flex: none; }
.feeds svg { margin-right: 7px; }
</style>
